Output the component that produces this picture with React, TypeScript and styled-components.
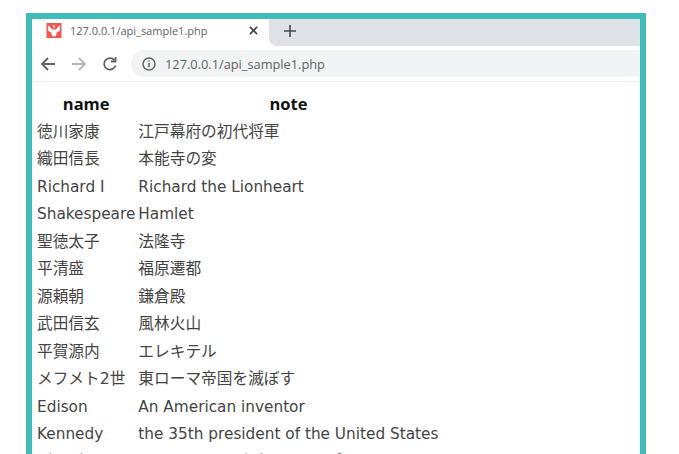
import React from "react";
import styled, { createGlobalStyle } from "styled-components";

const PEOPLE = [
  ["徳川家康", "江戸幕府の初代将軍"],
  ["織田信長", "本能寺の変"],
  ["Richard I", "Richard the Lionheart"],
  ["Shakespeare", "Hamlet"],
  ["聖徳太子", "法隆寺"],
  ["平清盛", "福原遷都"],
  ["源頼朝", "鎌倉殿"],
  ["武田信玄", "風林火山"],
  ["平賀源内", "エレキテル"],
  ["メフメト2世", "東ローマ帝国を滅ぼす"],
  ["Edison", "An American inventor"],
  ["Kennedy", "the 35th president of the United States"],
  ["ダ・ヴィンチ", "モナ・リザとダヴィンチ・ポスト"],
];

const isLatin = (text: string) => /^[\x20-\x7e]+$/.test(text);

export default function App() {
  return (
    <>
      <GlobalStyle />
      <Page>
        <Browser>
          <TabStrip>
            <ActiveTab>
              <Favicon viewBox="0 0 16 16">
                <rect width="16" height="16" fill="#f4574c" />
                <path
                  d="M8 1.500l1.300 2.500L8 5.500 6.700 4zM1.500 2.500L5 5.500l1 1.500h4l1-1.500 3.500-3-.5 6-3 1.500L10 14H6L5 10 2 8.500z"
                  fill="#fff"
                />
              </Favicon>
              <TabTitle>127.0.0.1/api_sample1.php</TabTitle>
              <CloseIcon viewBox="0 0 10 10">
                <path d="M1 1l8 8M9 1l-8 8" />
              </CloseIcon>
            </ActiveTab>
            <TabRest>
              <NewTab viewBox="0 0 12 12">
                <path d="M6 0v12M0 6h12" />
              </NewTab>
            </TabRest>
          </TabStrip>
          <Toolbar>
            <NavIcon viewBox="0 0 16 16" $muted={false}>
              <path d="M15 8H2M8 2L2 8l6 6" />
            </NavIcon>
            <NavIcon viewBox="0 0 16 16" $muted>
              <path d="M1 8h13M8 2l6 6-6 6" />
            </NavIcon>
            <NavIcon viewBox="0 0 16 16" $muted={false}>
              <path d="M13.500 9.500A5.800 5.800 0 1 1 12.300 4M13.500 1v4.500H9" />
            </NavIcon>
            <Omnibox>
              <InfoIcon viewBox="0 0 14 14">
                <circle cx="7" cy="7" r="6" />
                <path d="M7 6v4.200M7 3.500v1.300" />
              </InfoIcon>
              <Url>127.0.0.1/api_sample1.php</Url>
            </Omnibox>
          </Toolbar>
          <Content>
            <Table>
              <thead>
                <tr>
                  <HeadCell>name</HeadCell>
                  <HeadCell>note</HeadCell>
                </tr>
              </thead>
              <tbody>
                {PEOPLE.map(([name, note]) => (
                  <tr key={name}>
                    <Cell $latin={isLatin(name)}>{name}</Cell>
                    <Cell $latin={isLatin(note)}>{note}</Cell>
                  </tr>
                ))}
              </tbody>
            </Table>
          </Content>
        </Browser>
      </Page>
    </>
  );
}

const GlobalStyle = createGlobalStyle`
  html, body {
    margin: 0;
    height: 100%;
    overflow: hidden;
    background: #fff;
  }
`;

const Page = styled.div`
  width: 679px;
  height: 454px;
  padding: 13px 33px 0 26px;
  box-sizing: border-box;
  overflow: hidden;
`;

const Browser = styled.div`
  border: 6px solid #40bdb9;
  border-bottom: 0;
  height: 441px;
  box-sizing: border-box;
  overflow: hidden;
  background: #fff;
`;

const TabStrip = styled.div`
  height: 27px;
  display: flex;
`;

const ActiveTab = styled.div`
  width: 237px;
  background: #fff;
  display: flex;
  align-items: center;
  padding: 0 11px 4px 14px;
  box-sizing: border-box;
`;

const TabRest = styled.div`
  flex: 1;
  background: #dee1e6;
  border-bottom-left-radius: 8px;
  display: flex;
  align-items: center;
  padding-bottom: 4px;
`;

const Favicon = styled.svg`
  width: 16px;
  height: 15px;
  flex: none;
`;

const TabTitle = styled.span`
  font: 11px "Open Sans", "Noto Sans", sans-serif;
  color: #5f6368;
  margin-left: 8px;
  flex: 1;
  white-space: nowrap;
`;

const CloseIcon = styled.svg`
  width: 9px;
  height: 9px;
  fill: none;
  stroke: #45484c;
  stroke-width: 1.8;
`;

const NewTab = styled.svg`
  width: 12px;
  height: 12px;
  margin-left: 15px;
  fill: none;
  stroke: #45484c;
  stroke-width: 1.6;
`;

const Toolbar = styled.div`
  height: 35px;
  border-bottom: 1px solid #eceded;
  display: flex;
  align-items: center;
  padding-left: 8px;
  gap: 15px;
`;

const NavIcon = styled.svg<{ $muted: boolean }>`
  width: 16px;
  height: 16px;
  flex: none;
  fill: none;
  stroke: ${({ $muted }) => ($muted ? "#b4b6b8" : "#5f6368")};
  stroke-width: 1.8;
`;

const Omnibox = styled.div`
  flex: 1;
  height: 27px;
  background: #f1f3f4;
  border-radius: 14px 0 0 14px;
  margin-left: -2px;
  display: flex;
  align-items: center;
  padding-left: 11px;
`;

const InfoIcon = styled.svg`
  width: 14px;
  height: 14px;
  fill: none;
  stroke: #5f6368;
  stroke-width: 1.5;
`;

const Url = styled.span`
  font: 12.8px "Open Sans", "Noto Sans", sans-serif;
  color: #5f6368;
  margin-left: 9px;
`;

const Content = styled.div`
  padding: 8px 0 0 2px;
`;

const Table = styled.table`
  border-collapse: separate;
  border-spacing: 3px 0;
  color: #444;
`;

const HeadCell = styled.th`
  height: 28px;
  padding: 0;
  font: 700 16.5px/20px "Open Sans", sans-serif;
  color: #111;
`;

const Cell = styled.td<{ $latin: boolean }>`
  height: 27.5px;
  padding: 0;
  white-space: nowrap;
  font-family: ${({ $latin }) =>
    $latin ? '"DejaVu Sans", sans-serif' : '"DejaVu Sans", "Noto Sans CJK JP", sans-serif'};
  font-size: ${({ $latin }) => ($latin ? "15.3px" : "15.7px")};
  line-height: 20px;
`;
